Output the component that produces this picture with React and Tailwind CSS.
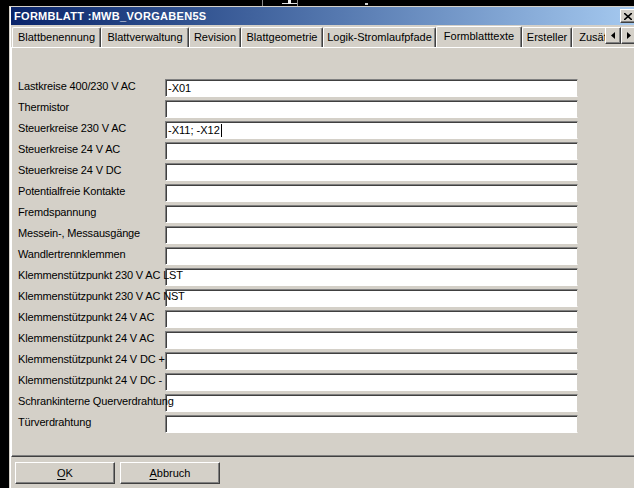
import React from "react";

const rows = [
  ["Lastkreise 400/230 V AC", "-X01"],
  ["Thermistor", ""],
  ["Steuerkreise 230 V AC", "-X11; -X12", true],
  ["Steuerkreise 24 V AC", ""],
  ["Steuerkreise 24 V DC", ""],
  ["Potentialfreie Kontakte", ""],
  ["Fremdspannung", ""],
  ["Messein-, Messausgänge", ""],
  ["Wandlertrennklemmen", ""],
  ["Klemmenstützpunkt 230 V AC LST", ""],
  ["Klemmenstützpunkt 230 V AC NST", ""],
  ["Klemmenstützpunkt 24 V AC", ""],
  ["Klemmenstützpunkt 24 V AC", ""],
  ["Klemmenstützpunkt 24 V DC +", ""],
  ["Klemmenstützpunkt 24 V DC -", ""],
  ["Schrankinterne Querverdrahtung", ""],
  ["Türverdrahtung", ""],
];

const tabs = [
  ["Blattbenennung", "w-[89px]"],
  ["Blattverwaltung", "w-[88px]"],
  ["Revision", "w-[52px]"],
  ["Blattgeometrie", "w-[82px]"],
  ["Logik-Stromlaufpfade", "w-[113px]"],
  ["Formblatttexte", "w-[86px]", true],
  ["Ersteller", "w-[50px]"],
  ["Zusätzliche", "w-[70px]"],
];

function Tab({ label, width, active }) {
  return (
    <div
      className={`${width} flex-none flex items-center justify-center rounded-t-[2px] border-t border-l border-r border-t-white border-l-white border-r-[#404040] shadow-[inset_-1px_0_0_#808080] bg-[#d4d0c8] ${
        active ? "h-[22px] pb-[3px] -mb-px relative z-10" : "h-[20px]"
      }`}
    >
      <span className="whitespace-nowrap">{label}</span>
    </div>
  );
}

function ScrollArrow({ dir }) {
  return (
    <div className="w-[16px] h-[17px] mt-[2px] flex-none flex items-center justify-center bg-[#d4d0c8] border border-t-white border-l-white border-r-[#404040] border-b-[#404040] shadow-[inset_-1px_-1px_0_#808080]">
      <svg width="4" height="7" viewBox="0 0 4 7">
        {dir === "left" ? (
          <polygon points="4,0 4,7 0,3.5" fill="black" />
        ) : (
          <polygon points="0,0 0,7 4,3.5" fill="black" />
        )}
      </svg>
    </div>
  );
}

function Button({ children }) {
  return (
    <button className="w-[100px] h-[22px] bg-[#d4d0c8] border border-t-white border-l-white border-r-[#404040] border-b-[#404040] shadow-[inset_-1px_-1px_0_#808080] text-black">
      {children}
    </button>
  );
}

export default function App() {
  return (
    <div className="w-[634px] h-[488px] bg-black overflow-hidden flex flex-col text-[11px] leading-none text-black font-['Liberation_Sans',Arial,sans-serif]">
      <div className="h-[6px] flex-none relative">
        <svg className="absolute left-0 top-0" width="634" height="6">
          <rect x="262" y="0" width="1" height="6" fill="#8a8a8a" />
          <rect x="282" y="3" width="15" height="1" fill="#e0e0e0" />
          <rect x="288" y="0" width="3" height="4" fill="#f0f0f0" />
          <rect x="297" y="0" width="1" height="6" fill="#8a8a8a" />
          <rect x="365" y="3" width="3" height="2" fill="#d0d0d0" />
        </svg>
      </div>
      <div className="flex-1 flex">
        <div className="w-[9px] flex-none" />
        <div className="w-[628px] flex-none bg-[#d4d0c8] border-l border-t border-[#d4d0c8] shadow-[inset_1px_0_0_white] pl-px flex flex-col">
          <div className="h-[18px] flex-none flex items-center justify-between pl-[3px] bg-linear-to-r from-[#0a246a] to-[#a6caf0]">
            <span className="text-white font-bold text-[11px] tracking-[0.3px]">
              FORMBLATT :MWB_VORGABEN5S
            </span>
            <div className="w-[16px] h-[14px] mr-[1px] flex items-center justify-center bg-[#d4d0c8] border border-t-white border-l-white border-r-[#404040] border-b-[#404040] shadow-[inset_-1px_-1px_0_#808080]">
              <svg width="8" height="7" viewBox="0 0 8 7">
                <path d="M0 0 L8 7 M8 0 L0 7" stroke="black" strokeWidth="1.6" />
              </svg>
            </div>
          </div>
          <div className="h-[22px] flex-none flex items-end pl-px">
            <div className="flex-1 flex items-end overflow-hidden">
              {tabs.map(([label, width, active]) => (
                <Tab key={label} label={label} width={width} active={active} />
              ))}
            </div>
            <div className="flex self-start">
              <ScrollArrow dir="left" />
              <ScrollArrow dir="right" />
            </div>
          </div>
          <div className="h-[410px] flex-none border-t border-l border-b border-t-white border-l-white border-b-[#404040] shadow-[inset_0_-1px_0_#808080] pt-[31px] pl-[6px]">
            <div className="grid grid-cols-[147px_413px] gap-y-[3px]">
              {rows.map(([label, value, caret], i) => (
                <React.Fragment key={i}>
                  <div className="relative z-10 h-[18px] flex items-center pb-[3px] whitespace-nowrap tracking-[-0.15px]">
                    {label}
                  </div>
                  <div className="h-[18px] bg-white border border-t-[#808080] border-l-[#808080] border-b-white border-r-[#d4d0c8] shadow-[inset_1px_1px_0_#404040] flex items-center pl-[2px] pt-px">
                    {value}
                    {caret && <span className="inline-block w-px h-[13px] bg-black ml-px" />}
                  </div>
                </React.Fragment>
              ))}
            </div>
          </div>
          <div className="flex gap-[5px] pl-[4px] pt-[5px]">
            <Button>
              <span className="underline underline-offset-2">O</span>K
            </Button>
            <Button>
              <span className="underline underline-offset-2">A</span>bbruch
            </Button>
          </div>
        </div>
      </div>
    </div>
  );
}
